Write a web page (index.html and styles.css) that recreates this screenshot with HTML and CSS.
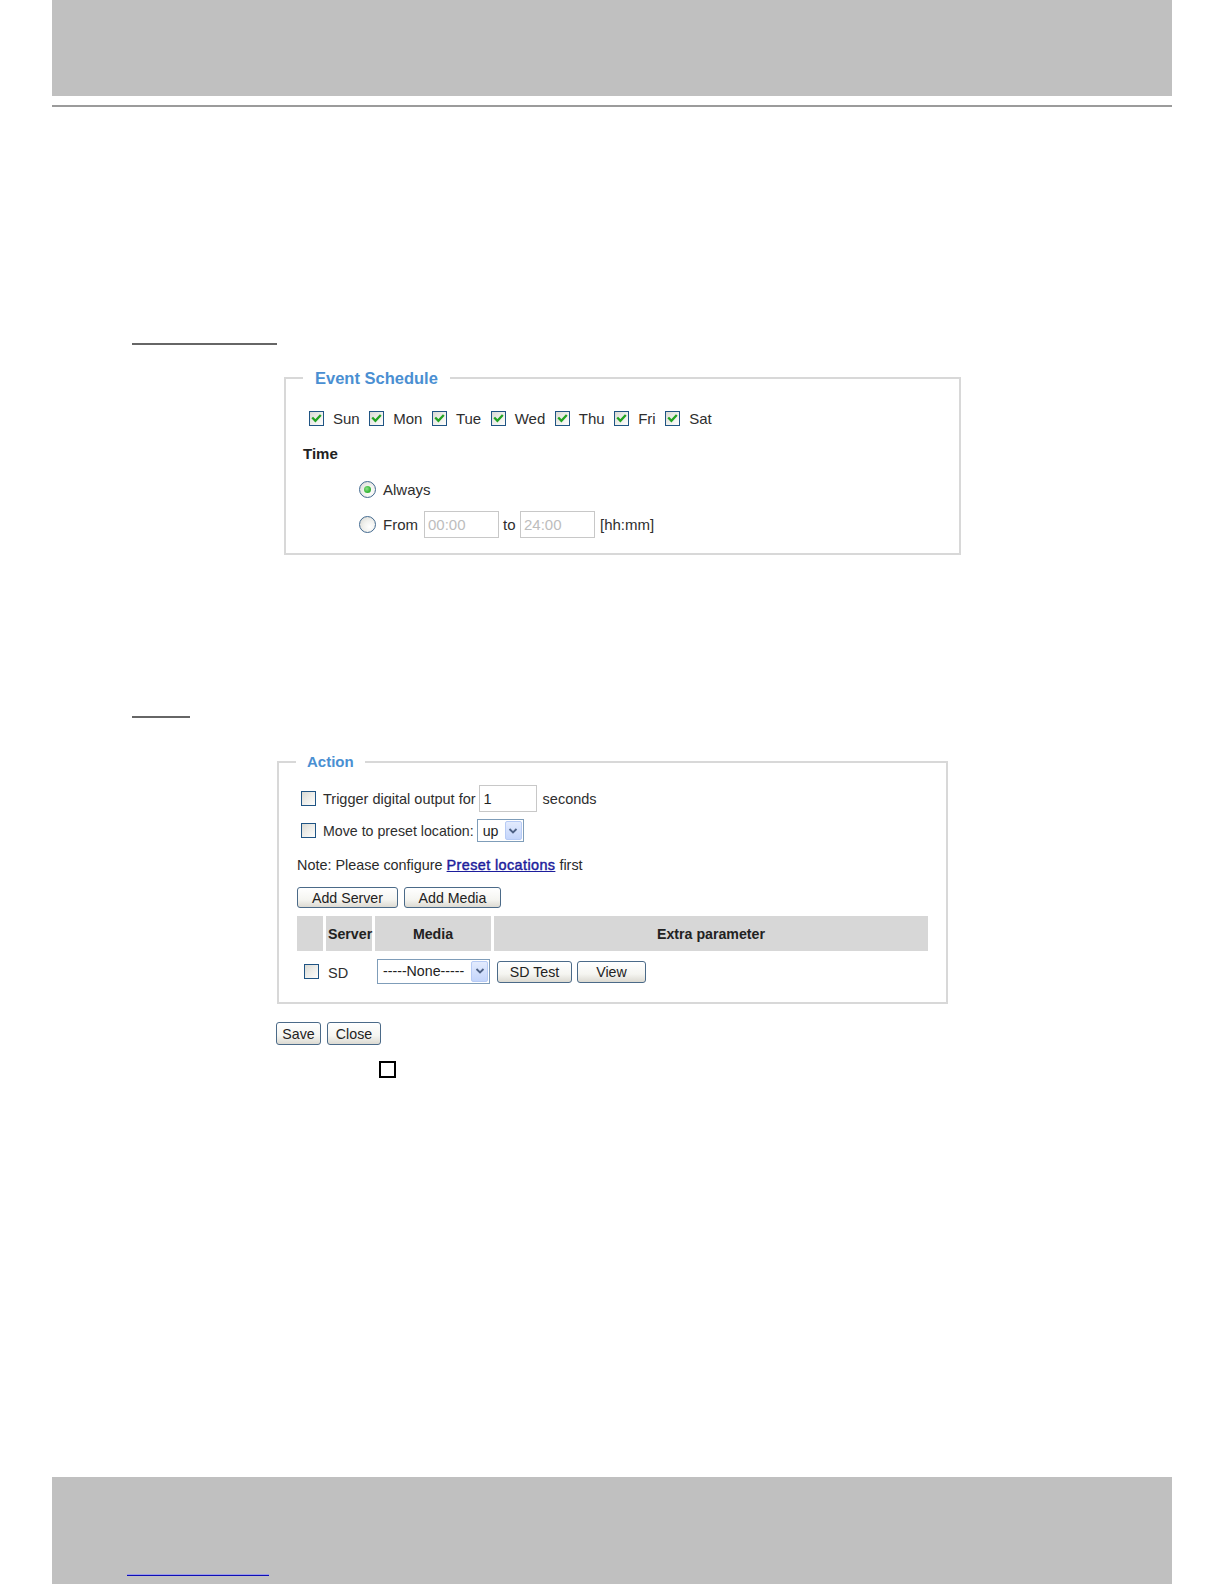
FILE: index.html
```html
<!DOCTYPE html>
<html lang="en">
<head>
<meta charset="utf-8">
<title>Event settings</title>
<link rel="stylesheet" href="styles.css">
</head>
<body>
<div class="page">
  <header class="top-band"></header>
  <div class="top-rule"></div>

  <div class="heading-line hl-1"></div>

  <fieldset class="panel sched">
    <legend class="panel-title">Event Schedule</legend>
    <div class="sched-body">
      <div class="days">
        <label class="day"><span class="cb"><svg viewBox="0 0 13 13"><path d="M3 6.3 L5.4 8.8 L10 3.9" /></svg></span><span class="lbl">Sun</span></label>
        <label class="day"><span class="cb"><svg viewBox="0 0 13 13"><path d="M3 6.3 L5.4 8.8 L10 3.9" /></svg></span><span class="lbl">Mon</span></label>
        <label class="day"><span class="cb"><svg viewBox="0 0 13 13"><path d="M3 6.3 L5.4 8.8 L10 3.9" /></svg></span><span class="lbl">Tue</span></label>
        <label class="day"><span class="cb"><svg viewBox="0 0 13 13"><path d="M3 6.3 L5.4 8.8 L10 3.9" /></svg></span><span class="lbl">Wed</span></label>
        <label class="day"><span class="cb"><svg viewBox="0 0 13 13"><path d="M3 6.3 L5.4 8.8 L10 3.9" /></svg></span><span class="lbl">Thu</span></label>
        <label class="day"><span class="cb"><svg viewBox="0 0 13 13"><path d="M3 6.3 L5.4 8.8 L10 3.9" /></svg></span><span class="lbl">Fri</span></label>
        <label class="day"><span class="cb"><svg viewBox="0 0 13 13"><path d="M3 6.3 L5.4 8.8 L10 3.9" /></svg></span><span class="lbl">Sat</span></label>
      </div>
      <div class="time-title">Time</div>
      <div class="opt-row opt-always"><span class="radio"><span class="radio-dot"></span></span><span class="lbl">Always</span></div>
      <div class="opt-row opt-from">
        <span class="radio"></span><span class="lbl">From</span>
        <input class="time-input" type="text" value="00:00" disabled>
        <span class="sep">to</span>
        <input class="time-input ti-2" type="text" value="24:00" disabled>
        <span class="unit">[hh:mm]</span>
      </div>
    </div>
  </fieldset>

  <div class="heading-line hl-2"></div>

  <fieldset class="panel action">
    <legend class="panel-title">Action</legend>
    <div class="action-body">
      <div class="act-row act-row-1">
        <span class="cb"></span><span class="lbl">Trigger digital output for</span>
        <input class="num-input" type="text" value="1">
        <span class="secs">seconds</span>
      </div>
      <div class="act-row act-row-2">
        <span class="cb"></span><span class="lbl">Move to preset location:</span>
        <span class="select sel-up"><span class="select-val">up</span><span class="select-arrow"><svg viewBox="0 0 10 8"><path d="M1.5 2 L5 5.5 L8.5 2" /></svg></span></span>
      </div>
      <div class="note">Note: Please configure <a href="#">Preset locations</a> first</div>
      <div class="btn-row">
        <button class="btn b-addserver" type="button">Add Server</button>
        <button class="btn b-addmedia" type="button">Add Media</button>
      </div>
      <table class="media-table">
        <colgroup>
          <col class="c1"><col class="c2"><col class="c3"><col>
        </colgroup>
        <thead>
          <tr><th></th><th class="th-server">Server</th><th>Media</th><th>Extra parameter</th></tr>
        </thead>
        <tbody>
          <tr>
            <td class="td-cb"><span class="cb"></span></td>
            <td class="td-sd">SD</td>
            <td class="td-media"><span class="select sel-none"><span class="select-val">-----None-----</span><span class="select-arrow"><svg viewBox="0 0 10 8"><path d="M1.5 2 L5 5.5 L8.5 2" /></svg></span></span></td>
            <td class="td-extra"><button class="btn b-sdtest" type="button">SD Test</button><button class="btn b-view" type="button">View</button></td>
          </tr>
        </tbody>
      </table>
    </div>
  </fieldset>

  <div class="save-row">
    <button class="btn b-save" type="button">Save</button>
    <button class="btn b-close" type="button">Close</button>
  </div>

  <div class="small-square"></div>

  <footer class="bottom-band">
    <div class="footer-link-line"></div>
  </footer>
</div>
</body>
</html>
```

FILE: styles.css
```css
* { box-sizing: border-box; }

body {
  margin: 0;
  background: #ffffff;
  font-family: "Liberation Sans", Arial, sans-serif;
  color: #2e2e2e;
}

.page {
  min-height: 1584px;
  display: flex;
  flex-direction: column;
}

.top-band {
  flex: none;
  height: 96px;
  margin: 0 52px;
  background: #c0c0c0;
}

.top-rule {
  flex: none;
  height: 2px;
  margin: 9px 52px 0;
  background: #9b9b9b;
}

.heading-line {
  flex: none;
  height: 2px;
  margin-left: 132px;
  background: #666666;
}
.hl-1 { width: 145px; margin-top: 236px; }
.hl-2 { width: 58px; margin-top: 161px; }

/* ---------- fieldset panels ---------- */
.panel {
  flex: none;
  margin: 0;
  padding: 0;
  min-width: 0;
  border: 2px solid #d8d8d8;
}

.panel-title {
  color: #4a8fd2;
  font-weight: bold;
  line-height: 20px;
  padding: 0 12px;
  margin-left: 17px;
}

.sched {
  width: 677px;
  margin: 23px 0 0 284px;
}
.sched .panel-title { font-size: 16.5px; }

.sched-body {
  padding: 19px 15px 15px 17px;
  font-size: 15px;
}

.days {
  display: flex;
  align-items: center;
  height: 22px;
  margin-left: 6px;
}
.day {
  display: flex;
  align-items: center;
  margin-right: 9.5px;
}
.day .lbl { margin-left: 9px; }

/* checkbox */
.cb {
  flex: none;
  width: 15px;
  height: 15px;
  border: 1px solid #1f5484;
  background: linear-gradient(135deg, #d9d9d3 0%, #ececE8 45%, #fdfdfc 100%);
  display: inline-flex;
  align-items: center;
  justify-content: center;
}
.cb svg { width: 13px; height: 13px; }
.cb svg path {
  fill: none;
  stroke: #22a322;
  stroke-width: 2.3;
  stroke-linecap: square;
  stroke-linejoin: miter;
}

.time-title {
  font-weight: bold;
  height: 22px;
  line-height: 22px;
  margin-top: 14px;
  color: #222222;
}

.opt-row {
  display: flex;
  align-items: center;
  margin-left: 56px;
}
.opt-always { height: 22px; margin-top: 13px; }
.opt-from { height: 27px; margin-top: 11px; }
.opt-row .lbl { margin-left: 7px; }

/* radio */
.radio {
  flex: none;
  width: 17px;
  height: 17px;
  border-radius: 50%;
  border: 1px solid #42698f;
  background: radial-gradient(circle at 65% 65%, #ffffff 0%, #f1f1ee 45%, #d6d6d0 100%);
  display: inline-flex;
  align-items: center;
  justify-content: center;
}
.radio-dot {
  width: 7px;
  height: 7px;
  border-radius: 50%;
  background: radial-gradient(circle at 40% 40%, #8fe08a 0%, #3dbb3d 55%, #1f9a22 100%);
}

.time-input {
  width: 75px;
  height: 27px;
  margin: 0 0 0 6px;
  padding: 0 0 0 3px;
  border: 1px solid #c8c8c8;
  background: #ffffff;
  font-family: "Liberation Sans", Arial, sans-serif;
  font-size: 15px;
  color: #bdbdbd;
}
.ti-2 { margin-left: 4.5px; }
.sep { margin-left: 4px; }
.unit { margin-left: 5px; }

/* ---------- action panel ---------- */
.action {
  width: 671px;
  margin: 34px 0 0 277px;
}
.action .panel-title {
  font-size: 15px;
  padding: 0 11px;
}

.action-body {
  padding: 13px 18px 13px 18px;
  font-size: 14.5px;
}

.act-row {
  display: flex;
  align-items: center;
  margin-left: 4px;
}
.act-row-1 { height: 27px; }
.act-row-2 { height: 23px; margin-top: 7px; }
.act-row .lbl { margin-left: 7px; }
.act-row-2 .lbl { font-size: 14.2px; }

.num-input {
  width: 58px;
  height: 27px;
  margin: 0 0 0 3px;
  padding: 0 0 0 4px;
  border: 1px solid #c8c8c8;
  background: #ffffff;
  font-family: "Liberation Sans", Arial, sans-serif;
  font-size: 14.5px;
  color: #222222;
}
.secs { margin-left: 6px; }

/* select imitation */
.select {
  display: inline-flex;
  align-items: stretch;
  height: 23px;
  padding: 1px;
  border: 1px solid #7f9db9;
  background: #ffffff;
  color: #222222;
  font-size: 14.2px;
}
.select-val {
  flex: 1;
  display: flex;
  align-items: center;
  padding-left: 4px;
  white-space: nowrap;
}
.select-arrow {
  flex: none;
  width: 17px;
  border: 1px solid #b7cbf5;
  border-radius: 2px;
  background: linear-gradient(#e3ebfd, #c4d5fb);
  display: flex;
  align-items: center;
  justify-content: center;
}
.select-arrow svg { width: 10px; height: 8px; }
.select-arrow svg path {
  fill: none;
  stroke: #4d6185;
  stroke-width: 1.8;
}
.sel-up { width: 47px; margin-left: 3px; }
.sel-none { width: 113px; height: 25px; }

.note {
  margin-top: 14px;
  line-height: 18px;
  color: #2a2a2a;
  font-size: 14.4px;
}
.note a {
  color: #1d1d9c;
  text-decoration: underline;
  letter-spacing: 0.4px;
  -webkit-text-stroke: 0.45px #1d1d9c;
}

/* buttons */
.btn {
  flex: none;
  height: 21px;
  padding: 0;
  border: 1px solid #4b6a88;
  border-radius: 3px;
  background: linear-gradient(#ffffff 0%, #f5f5f1 60%, #dcdad2 100%);
  font-family: "Liberation Sans", Arial, sans-serif;
  font-size: 14.2px;
  color: #222222;
  display: inline-flex;
  align-items: center;
  justify-content: center;
}

.btn-row {
  display: flex;
  gap: 6px;
  margin-top: 13px;
}
.b-addserver { width: 101px; }
.b-addmedia { width: 97px; }

/* table */
.media-table {
  width: calc(100% + 6px);
  margin: 8px -3px 0;
  border-collapse: separate;
  border-spacing: 3px 0;
  table-layout: fixed;
}
.media-table .c1 { width: 26px; }
.media-table .c2 { width: 46px; }
.media-table .c3 { width: 116px; }
.media-table th {
  height: 35px;
  padding: 0;
  background: #d7d7d7;
  font-weight: bold;
  font-size: 14.2px;
  color: #222222;
  text-align: center;
}
.media-table th.th-server { text-align: left; padding-left: 2px; }
.media-table td {
  height: 38px;
  padding: 0;
  vertical-align: middle;
}
.td-cb { padding-left: 7px !important; padding-top: 6px !important; }
.td-sd { padding-left: 2px !important; padding-top: 6px !important; }
.td-media { padding-left: 2px !important; padding-top: 2px !important; }
.td-extra { padding-left: 3px !important; padding-top: 4px !important; }
.td-extra .btn { height: 22px; }
.b-sdtest { width: 75px; }
.b-view { width: 69px; margin-left: 5px; }

/* save row */
.save-row {
  flex: none;
  display: flex;
  gap: 6px;
  margin: 18px 0 0 276px;
}
.b-save { width: 45px; height: 23px; }
.b-close { width: 54px; height: 23px; }

.small-square {
  flex: none;
  width: 17px;
  height: 17px;
  margin: 16px 0 0 379px;
  border: 2px solid #000000;
}

/* footer */
.bottom-band {
  flex: none;
  margin: auto 52px 0;
  height: 107px;
  padding: 97px 0 0 75px;
  background: #c0c0c0;
}
.footer-link-line {
  width: 142px;
  height: 2px;
  background: linear-gradient(#9a9ae8 0 50%, #0e0eb4 50% 100%);
}
```
